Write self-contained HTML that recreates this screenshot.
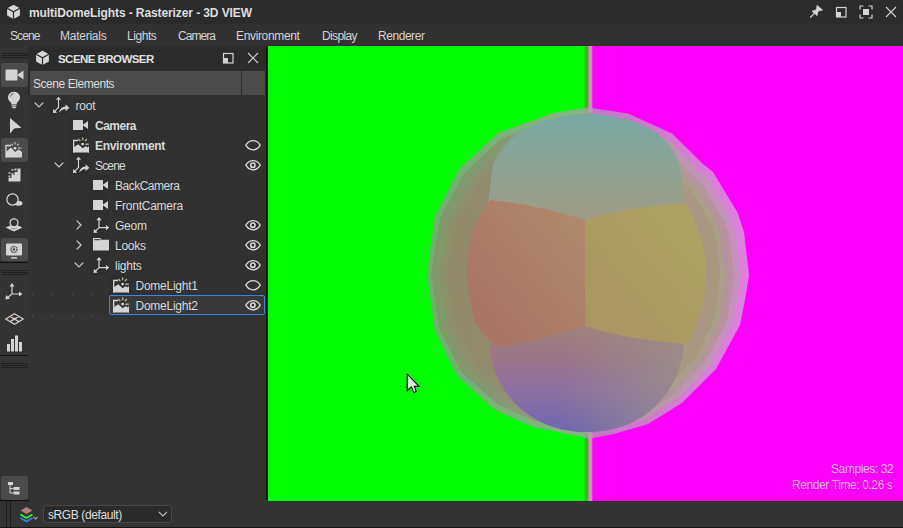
<!DOCTYPE html>
<html><head><meta charset="utf-8">
<style>
*{margin:0;padding:0;box-sizing:border-box}
html,body{width:903px;height:528px;overflow:hidden;background:#333333;font-family:"Liberation Sans",sans-serif;color:#d8d8d8}
.abs{position:absolute}
svg{position:absolute;overflow:visible}
.mi{position:absolute;top:29px;font-size:12px;letter-spacing:-0.45px;color:#d4d4d4;line-height:14px;white-space:pre}
.t{position:absolute;font-size:12px;line-height:14px;white-space:pre;color:#d8d8d8}
.b{font-weight:bold}
</style></head><body>
<!-- title bar -->
<div class="abs" style="left:0;top:0;width:903px;height:24px;background:#2b2b2b"></div>
<div class="abs" style="left:0;top:24px;width:903px;height:22px;background:#313131"></div>
<svg style="left:6px;top:3.5px" width="15" height="16" viewBox="0 0 15 16">
  <polygon points="7.5,0.8 13.9,4.3 13.9,11.4 7.5,14.9 1.1,11.4 1.1,4.3" fill="#d6d6d6"/>
  <polyline points="1.1,4.3 7.5,7.8 13.9,4.3" fill="none" stroke="#2b2b2b" stroke-width="1.2"/>
  <line x1="7.5" y1="7.8" x2="7.5" y2="15" stroke="#2b2b2b" stroke-width="1.2"/>
</svg>
<div class="abs b" style="left:29px;top:6px;font-size:12px;color:#dedede;line-height:14px;white-space:pre;letter-spacing:-0.1px">multiDomeLights - Rasterizer - 3D VIEW</div>
<!-- window buttons -->
<svg style="left:809px;top:4px" width="15" height="15" viewBox="0 0 15 15">
  <line x1="1.4" y1="13.4" x2="5.6" y2="9.2" stroke="#d8d8d8" stroke-width="1.2" stroke-linecap="round"/>
  <polygon points="3,7.1 7.2,5.9 8.1,1.2 13.6,6.1 9,7.3 8.1,11.8" fill="#d4d4d4" stroke="#d4d4d4" stroke-width="0.6" stroke-linejoin="round"/>
</svg>
<svg style="left:835px;top:6px" width="12" height="12" viewBox="0 0 12 12">
  <rect x="1.5" y="1.5" width="9.5" height="9.5" fill="none" stroke="#d4d4d4" stroke-width="1.2"/>
  <rect x="1.5" y="6" width="4.5" height="5" fill="#d4d4d4"/>
</svg>
<svg style="left:859px;top:5px" width="14" height="14" viewBox="0 0 14 14">
  <path d="M1,4.5 V1 H4.5 M9.5,1 H13 V4.5 M13,9.5 V13 H9.5 M4.5,13 H1 V9.5" fill="none" stroke="#d4d4d4" stroke-width="1.2"/>
  <rect x="4" y="4" width="6" height="6" fill="#d4d4d4"/>
</svg>
<svg style="left:885px;top:6px" width="12" height="12" viewBox="0 0 12 12">
  <path d="M1,1 L11,11 M11,1 L1,11" stroke="#d0d0d0" stroke-width="1.1"/>
</svg>
<!-- menu -->
<div class="mi" style="left:10px;letter-spacing:-0.9px">Scene</div>
<div class="mi" style="left:60px;letter-spacing:-0.25px">Materials</div>
<div class="mi" style="left:127px">Lights</div>
<div class="mi" style="left:178px;letter-spacing:-0.95px">Camera</div>
<div class="mi" style="left:236px;letter-spacing:-0.35px">Environment</div>
<div class="mi" style="left:322px;letter-spacing:-0.65px">Display</div>
<div class="mi" style="left:378px;letter-spacing:-0.45px">Renderer</div>

<!-- left toolbar -->
<div class="abs" style="left:1px;top:53px;width:27px;height:1px;background:#1f1f1f"></div>
<div class="abs" style="left:1px;top:55px;width:27px;height:1px;background:#1f1f1f"></div>
<div class="abs" style="left:1px;top:57px;width:27px;height:1px;background:#1f1f1f"></div>
<div class="abs" style="left:1px;top:63px;width:27px;height:24px;background:#4b4b4b;border-radius:3px"></div>
<svg style="left:5px;top:69px" width="19" height="12" viewBox="0 0 19 12">
  <rect x="0.5" y="0.5" width="12" height="11" rx="1" fill="#d4d4d4"/>
  <polygon points="12,6 18.5,1.5 18.5,10.5" fill="#d4d4d4"/>
</svg>
<svg style="left:7px;top:91px" width="14" height="18" viewBox="0 0 14 18">
  <path d="M7,0.8 C3.5,0.8 1,3.3 1,6.4 C1,8.6 2.3,9.8 3.6,11.3 C4.3,12.2 4.4,13 4.4,13.6 H9.6 C9.6,13 9.7,12.2 10.4,11.3 C11.7,9.8 13,8.6 13,6.4 C13,3.3 10.5,0.8 7,0.8 Z" fill="#d4d4d4"/>
  <path d="M3.5,5.5 C3.8,3.8 5,2.8 6.5,2.6" fill="none" stroke="#333" stroke-width="0.9"/>
  <rect x="4.5" y="14.3" width="5" height="1.2" fill="#d4d4d4"/>
  <rect x="5.2" y="16" width="3.6" height="1.2" fill="#d4d4d4"/>
</svg>
<svg style="left:9px;top:118px" width="13" height="16" viewBox="0 0 13 16">
  <polygon points="1,0 12.5,9.8 5.2,10.6 1,15.8" fill="#d4d4d4"/>
</svg>
<div class="abs" style="left:1px;top:138px;width:27px;height:24px;background:#4b4b4b;border-radius:3px"></div>
<svg id="envtb" style="left:5px;top:141px" width="18" height="17" viewBox="0 0 18 17">
  <path d="M1,16.5 V4.5 H6" fill="none" stroke="#d4d4d4" stroke-width="1.3"/>
  <path d="M1,16.5 V11 L6,6.5 L10,11 L13.5,8.5 L17,11 V16.5 Z" fill="#d4d4d4"/>
  <circle cx="10" cy="7.2" r="1.3" fill="#e0e0e0"/>
  <path d="M10,1 V3.5 M6.3,2.8 L7.8,4.5 M13.7,2.8 L12.2,4.5 M13,7.2 H16.5" stroke="#b8b898" stroke-width="1.3"/>
</svg>
<svg style="left:8px;top:168px" width="13" height="14" viewBox="0 0 13 14">
  <path d="M12.5,0.5 V13.5 H0.5 V10 H3.5 V7 H6.5 V4 H9.5 V0.5 Z" fill="#d4d4d4"/>
  <rect x="0.5" y="4" width="2" height="2" fill="#b0a0a0"/>
  <rect x="3.5" y="1" width="2" height="2" fill="#b0a0a0"/>
  <rect x="6.5" y="0.5" width="2" height="2" fill="#d0c0c0"/>
  <rect x="3.5" y="5" width="2" height="2" fill="#c8b8b8"/>
  <rect x="0.5" y="7.5" width="2" height="2" fill="#c8b8b8"/>
</svg>
<svg style="left:6px;top:193px" width="17" height="14" viewBox="0 0 17 14">
  <path d="M6,10 C9,13.5 16.5,13.5 16.5,10.5 C16.5,8.5 14,7.8 12.3,7.8" fill="#d4d4d4"/>
  <circle cx="6.5" cy="6.5" r="5.6" fill="#333" stroke="#d4d4d4" stroke-width="1.2"/>
</svg>
<svg style="left:5px;top:218px" width="18" height="14" viewBox="0 0 18 14">
  <path d="M0.5,9.5 L9,6 L17.5,9.5 L9,13.5 Z" fill="#d4d4d4"/>
  <circle cx="9" cy="4.8" r="4" fill="#333" stroke="#d4d4d4" stroke-width="1.2"/>
  <path d="M6,10 Q9,11.5 12,10" stroke="#a89898" stroke-width="1.3" fill="none"/>
</svg>
<div class="abs" style="left:1px;top:238px;width:27px;height:23px;background:#4b4b4b;border-radius:3px"></div>
<svg style="left:5px;top:243px" width="18" height="16" viewBox="0 0 18 16">
  <rect x="1" y="0.5" width="16" height="12" rx="1" fill="#d4d4d4"/>
  <rect x="6" y="14.2" width="6" height="1.4" fill="#d4d4d4"/>
  <circle cx="9" cy="6.5" r="3" fill="none" stroke="#444" stroke-width="1.6" stroke-dasharray="1.2 0.8"/>
  <circle cx="9" cy="6.5" r="1.2" fill="#444"/>
</svg>
<div class="abs" style="left:0;top:262px;width:28px;height:1px;background:#111"></div>
<div class="abs" style="left:1px;top:270px;width:27px;height:1px;background:#1f1f1f"></div>
<div class="abs" style="left:1px;top:272px;width:27px;height:1px;background:#1f1f1f"></div>
<div class="abs" style="left:1px;top:274px;width:27px;height:1px;background:#1f1f1f"></div>
<svg style="left:5px;top:283px" width="18" height="17" viewBox="0 0 18 17">
  <path d="M7,2.5 V11 H15.5 M7,11 L1.5,15.5" fill="none" stroke="#d4d4d4" stroke-width="1.2"/>
  <polygon points="7,0 4.5,3.5 9.5,3.5" fill="#d4d4d4"/>
  <polygon points="17.5,11 14,8.5 14,13.5" fill="#d4d4d4"/>
  <polygon points="0.5,16.5 1,12 5,15.8" fill="#d4d4d4"/>
</svg>
<svg style="left:5px;top:313px" width="19" height="12" viewBox="0 0 19 12">
  <path d="M9.5,0.8 L18.2,6 L9.5,11.2 L0.8,6 Z M5.2,3.4 L13.8,8.6 M13.8,3.4 L5.2,8.6" fill="none" stroke="#d4c8c0" stroke-width="1.3"/>
</svg>
<svg style="left:6px;top:335px" width="17" height="17" viewBox="0 0 17 17">
  <rect x="1" y="9" width="3" height="7.5" fill="#d4d4d4"/>
  <rect x="5" y="4" width="3" height="12.5" fill="#d4d4d4"/>
  <rect x="9" y="0.5" width="3" height="16" fill="#d4d4d4"/>
  <rect x="13" y="7" width="3" height="9.5" fill="#d4d4d4"/>
</svg>
<div class="abs" style="left:0;top:355px;width:28px;height:1px;background:#111"></div>
<div class="abs" style="left:1px;top:363px;width:27px;height:1px;background:#1f1f1f"></div>
<div class="abs" style="left:1px;top:365px;width:27px;height:1px;background:#1f1f1f"></div>
<div class="abs" style="left:1px;top:367px;width:27px;height:1px;background:#1f1f1f"></div>
<div class="abs" style="left:1px;top:476px;width:27px;height:24px;background:#4b4b4b;border-radius:3px"></div>
<svg style="left:7px;top:481px" width="14" height="14" viewBox="0 0 14 14">
  <rect x="1" y="1" width="5" height="3" fill="#d4d4d4"/>
  <rect x="6.5" y="6" width="6" height="3" fill="#d4d4d4"/>
  <rect x="6.5" y="10.5" width="6" height="3" fill="#d4d4d4"/>
  <path d="M3,4 V12 H6.5 M3,7.5 H6.5" fill="none" stroke="#d4d4d4" stroke-width="1"/>
</svg>
<div class="abs" style="left:0;top:500px;width:29px;height:1px;background:#111"></div>

<!-- scene browser panel -->
<div class="abs" style="left:28px;top:46px;width:238px;height:24px;background:#2b2b2b"></div>
<svg style="left:35px;top:50px" width="15" height="16" viewBox="0 0 15 16">
  <polygon points="7.5,0.8 13.9,4.3 13.9,11.4 7.5,14.9 1.1,11.4 1.1,4.3" fill="#d6d6d6"/>
  <polyline points="1.1,4.3 7.5,7.8 13.9,4.3" fill="none" stroke="#2b2b2b" stroke-width="1.2"/>
  <line x1="7.5" y1="7.8" x2="7.5" y2="15" stroke="#2b2b2b" stroke-width="1.2"/>
</svg>
<div class="abs b" style="left:58px;top:52px;font-size:11.5px;line-height:14px;color:#e0e0e0;white-space:pre;letter-spacing:-0.55px">SCENE BROWSER</div>
<svg style="left:222px;top:52px" width="12" height="12" viewBox="0 0 12 12">
  <rect x="1.5" y="1.5" width="9.5" height="9.5" fill="none" stroke="#d4d4d4" stroke-width="1.2"/>
  <rect x="1.5" y="6" width="4.5" height="5" fill="#d4d4d4"/>
</svg>
<svg style="left:247px;top:52px" width="12" height="12" viewBox="0 0 12 12">
  <path d="M1,1 L11,11 M11,1 L1,11" stroke="#d0d0d0" stroke-width="1.1"/>
</svg>
<div class="abs" style="left:28px;top:70px;width:238px;height:25px;background:#2b2b2b"></div>
<div class="abs" style="left:30px;top:71px;width:211px;height:24px;background:#4b4b4b"></div>
<div class="abs" style="left:242px;top:71px;width:23px;height:24px;background:#4b4b4b"></div>
<div class="t" style="left:33px;top:77px;letter-spacing:-0.45px;color:#dadada">Scene Elements</div>

<!-- tree row icon cells (subtle) -->
<div class="abs" style="left:29px;top:95px;width:236px;height:220px;background:#313131"></div>
<div class="abs" style="left:49px;top:95px;width:20px;height:20px;background:#2e2e2e"></div>
<div class="abs" style="left:69px;top:115px;width:20px;height:40px;background:#2e2e2e"></div>
<div class="abs" style="left:69px;top:155px;width:20px;height:20px;background:#2e2e2e"></div>
<div class="abs" style="left:89px;top:175px;width:20px;height:100px;background:#2e2e2e"></div>
<div class="abs" style="left:109px;top:275px;width:20px;height:20px;background:#2e2e2e"></div>

<div class="abs" style="left:32px;top:294px;width:1px;height:1px;background:#4a5a8a"></div><div class="abs" style="left:52px;top:294px;width:1px;height:1px;background:#4a5a8a"></div><div class="abs" style="left:72px;top:294px;width:1px;height:1px;background:#4a5a8a"></div><div class="abs" style="left:92px;top:294px;width:1px;height:1px;background:#4a5a8a"></div><div class="abs" style="left:32px;top:315px;width:1px;height:1px;background:#4a5a8a"></div><div class="abs" style="left:52px;top:315px;width:1px;height:1px;background:#4a5a8a"></div><div class="abs" style="left:72px;top:315px;width:1px;height:1px;background:#4a5a8a"></div><div class="abs" style="left:92px;top:315px;width:1px;height:1px;background:#4a5a8a"></div>
<!-- selection -->
<div class="abs" style="left:109px;top:295px;width:156px;height:20px;background:#393939;border:1px solid #3a84e6;border-radius:2px"></div>
<!--TREE--><svg width="0" height="0" style="position:absolute"><defs>
<g id="i-xf"><path d="M6.5,3.5 V11.5 L2.6,15.4" fill="none" stroke="#d4d4d4" stroke-width="1.1"/>
<polygon points="6.5,0.8 3.9,3.8 9.1,3.8" fill="#d4d4d4"/><polygon points="1,17 1.2,12.9 5.1,16.8" fill="#d4d4d4"/>
<path d="M7,16.6 C7.6,13.2 10,10.9 13.6,10.6 V8.2 L17.3,11.8 L13.6,15.3 V13 C11,13 9,14.6 7,16.6 Z" fill="#d4d4d4"/></g>
<g id="i-ax"><path d="M6,2.5 V10.6 H13.5 M6,10.6 L1.8,14.8" fill="none" stroke="#d4d4d4" stroke-width="1.2"/>
<polygon points="6,0 3.4,3.2 8.6,3.2" fill="#d4d4d4"/><polygon points="16.2,10.6 13,8 13,13.2" fill="#d4d4d4"/><polygon points="0.6,16 1,11.8 4.6,15.4" fill="#d4d4d4"/></g>
<g id="i-cam"><rect x="0" y="0" width="10" height="10" rx="0.6" fill="#d4d4d4"/><polygon points="9.5,5 15,1 15,9" fill="#d4d4d4"/></g>
<g id="i-env"><path d="M0.7,15.5 V3.5 H5.2" fill="none" stroke="#d4d4d4" stroke-width="1.3"/>
<path d="M0.2,15.5 V10.8 L5.2,7.3 L9.6,11.3 L12.6,9.2 L16,11.3 V15.5 Z" fill="#d4d4d4"/>
<path d="M15.4,15.5 V9.5" stroke="#d4d4d4" stroke-width="1.2"/>
<rect x="8.5" y="6" width="2.2" height="2.2" fill="#e8e8e8"/>
<path d="M9.6,0.5 V3.2 M5.4,2 L7.3,4.1 M13.8,2 L11.9,4.1 M12.3,7.2 H15.8" stroke="#b4b498" stroke-width="1.4"/></g>
<g id="i-fold"><path d="M0,0 H7.2 L8.5,1.8 H16 V12.6 H0 Z" fill="#d4d4d4"/><rect x="1.2" y="1.2" width="6.2" height="1" fill="#2f2f2f"/></g>
<g id="i-eye"><path d="M0.8,5.2 C3,1.4 5.5,0.6 8,0.6 C10.5,0.6 13,1.4 15.2,5.2 C13,9 10.5,9.8 8,9.8 C5.5,9.8 3,9 0.8,5.2 Z" fill="none" stroke="#d8d8d8" stroke-width="1.3"/></g>
<g id="i-eyeo"><use href="#i-eye"/><circle cx="7.9" cy="5.2" r="2.2" fill="none" stroke="#d8d8d8" stroke-width="1.6"/></g>
<path id="i-down" d="M0.7,0.7 L5,5 L9.3,0.7" fill="none" stroke="#cfcfcf" stroke-width="1.2"/>
<path id="i-right" d="M0.7,0.7 L5,5 L0.7,9.3" fill="none" stroke="#cfcfcf" stroke-width="1.2"/>
</defs></svg>
<svg style="left:34px;top:102px" width="11" height="7"><use href="#i-down"/></svg>
<svg style="left:52px;top:96px" width="18" height="17"><use href="#i-xf"/></svg>
<div class="t" style="left:75.5px;top:99px;letter-spacing:-0.2px">root</div>
<svg style="left:73px;top:120px" width="18" height="17"><use href="#i-cam"/></svg>
<div class="t b" style="left:95px;top:119px;letter-spacing:-0.5px">Camera</div>
<svg style="left:73px;top:137px" width="18" height="17"><use href="#i-env"/></svg>
<div class="t b" style="left:95px;top:139px;letter-spacing:-0.3px">Environment</div>
<svg style="left:245px;top:140px" width="17" height="11"><use href="#i-eye"/></svg>
<svg style="left:54px;top:162px" width="11" height="7"><use href="#i-down"/></svg>
<svg style="left:72px;top:156px" width="18" height="17"><use href="#i-xf"/></svg>
<div class="t" style="left:95px;top:159px;letter-spacing:-0.85px">Scene</div>
<svg style="left:245px;top:160px" width="17" height="11"><use href="#i-eyeo"/></svg>
<svg style="left:93px;top:180px" width="18" height="17"><use href="#i-cam"/></svg>
<div class="t" style="left:115px;top:179px;letter-spacing:-0.5px">BackCamera</div>
<svg style="left:93px;top:200px" width="18" height="17"><use href="#i-cam"/></svg>
<div class="t" style="left:115px;top:199px;letter-spacing:-0.25px">FrontCamera</div>
<svg style="left:76px;top:220px" width="7" height="11"><use href="#i-right"/></svg>
<svg style="left:93px;top:217px" width="18" height="17"><use href="#i-ax"/></svg>
<div class="t" style="left:115px;top:219px;letter-spacing:-0.25px">Geom</div>
<svg style="left:245px;top:220px" width="17" height="11"><use href="#i-eyeo"/></svg>
<svg style="left:76px;top:240px" width="7" height="11"><use href="#i-right"/></svg>
<svg style="left:93px;top:238px" width="18" height="17"><use href="#i-fold"/></svg>
<div class="t" style="left:115px;top:239px;letter-spacing:-0.25px">Looks</div>
<svg style="left:245px;top:240px" width="17" height="11"><use href="#i-eyeo"/></svg>
<svg style="left:74px;top:262px" width="11" height="7"><use href="#i-down"/></svg>
<svg style="left:93px;top:257px" width="18" height="17"><use href="#i-ax"/></svg>
<div class="t" style="left:115px;top:259px;letter-spacing:-0.25px">lights</div>
<svg style="left:245px;top:260px" width="17" height="11"><use href="#i-eyeo"/></svg>
<svg style="left:113px;top:277px" width="18" height="17"><use href="#i-env"/></svg>
<div class="t" style="left:135.5px;top:279px;letter-spacing:-0.25px">DomeLight1</div>
<svg style="left:245px;top:280px" width="17" height="11"><use href="#i-eye"/></svg>
<svg style="left:113px;top:297px" width="18" height="17"><use href="#i-env"/></svg>
<div class="t" style="left:135.5px;top:299px;letter-spacing:-0.25px">DomeLight2</div>
<svg style="left:245px;top:300px" width="17" height="11"><use href="#i-eyeo"/></svg><!--/TREE-->

<!-- viewport -->
<div class="abs" style="left:266px;top:46px;width:1px;height:454px;background:#141414"></div><div class="abs" style="left:267px;top:46px;width:1px;height:455px;background:#262626"></div>
<div class="abs" style="left:268px;top:46px;width:635px;height:455px;background:linear-gradient(90deg,#00ff00 0,#00ff00 315px,#3aa81c 319px,#a8a07c 321px,#e890e0 323px,#ff00ff 325px)"></div>
<svg id="sphere" style="left:268px;top:46px" width="635" height="455" viewBox="268 46 635 455"><defs>
<linearGradient id="gtop" x1="0" y1="0" x2="0" y2="1">
 <stop offset="0" stop-color="#76aaa6"/><stop offset="0.4" stop-color="#8aa496"/><stop offset="1" stop-color="#9e9c86"/>
</linearGradient>
<linearGradient id="gbot" x1="0" y1="0" x2="0" y2="1">
 <stop offset="0" stop-color="#a08078"/><stop offset="0.3" stop-color="#9a7488"/><stop offset="0.62" stop-color="#8c70a2"/><stop offset="1" stop-color="#7066b2"/>
</linearGradient>
<linearGradient id="gbotr" gradientUnits="userSpaceOnUse" x1="560" y1="0" x2="690" y2="0">
 <stop offset="0" stop-color="#989088" stop-opacity="0"/><stop offset="1" stop-color="#9a9088" stop-opacity="0.85"/>
</linearGradient>
<linearGradient id="gor" x1="1" y1="0" x2="0" y2="1">
 <stop offset="0" stop-color="#b08a6a"/><stop offset="1" stop-color="#a87062"/>
</linearGradient>
<linearGradient id="gye" x1="1" y1="0" x2="0" y2="1">
 <stop offset="0" stop-color="#aca662"/><stop offset="1" stop-color="#aa9462"/>
</linearGradient>
<linearGradient id="gl0" gradientUnits="userSpaceOnUse" x1="427" y1="0" x2="749" y2="0"><stop offset="0" stop-color="#969696"/><stop offset="0.5" stop-color="#b0a0b0"/><stop offset="1" stop-color="#d5abd5"/></linearGradient><linearGradient id="gl1" gradientUnits="userSpaceOnUse" x1="427" y1="0" x2="749" y2="0"><stop offset="0" stop-color="#809868"/><stop offset="0.2" stop-color="#849870"/><stop offset="0.5" stop-color="#a49a8a"/><stop offset="0.8" stop-color="#c094b4"/><stop offset="1" stop-color="#c890c0"/></linearGradient><linearGradient id="gl2" gradientUnits="userSpaceOnUse" x1="427" y1="0" x2="749" y2="0"><stop offset="0" stop-color="#8a9068"/><stop offset="0.2" stop-color="#8c9070"/><stop offset="0.5" stop-color="#a09888"/><stop offset="0.8" stop-color="#b09898"/><stop offset="1" stop-color="#b890a0"/></linearGradient><linearGradient id="gl3" gradientUnits="userSpaceOnUse" x1="427" y1="0" x2="749" y2="0"><stop offset="0" stop-color="#908868"/><stop offset="0.2" stop-color="#928a6c"/><stop offset="0.5" stop-color="#a09a84"/><stop offset="0.8" stop-color="#a8a088"/><stop offset="1" stop-color="#a8a088"/></linearGradient><linearGradient id="gl4" gradientUnits="userSpaceOnUse" x1="427" y1="0" x2="749" y2="0"><stop offset="0" stop-color="#908868"/><stop offset="0.2" stop-color="#928a6c"/><stop offset="0.5" stop-color="#a09a84"/><stop offset="0.8" stop-color="#a89884"/><stop offset="1" stop-color="#a89880"/></linearGradient><filter id="bl1" x="-5%" y="-5%" width="110%" height="110%"><feGaussianBlur stdDeviation="1.2"/></filter><linearGradient id="gl4" gradientUnits="userSpaceOnUse" x1="427" y1="0" x2="749" y2="0"><stop offset="0" stop-color="#908868"/><stop offset="0.2" stop-color="#928a6c"/><stop offset="0.5" stop-color="#a09a84"/><stop offset="0.8" stop-color="#a89884"/><stop offset="1" stop-color="#a89880"/></linearGradient><filter id="bl2" x="-5%" y="-5%" width="110%" height="110%"><feGaussianBlur stdDeviation="0.8"/></filter></defs>
<polygon points="588.0,107.5 628.0,113.5 672.0,133.5 703.0,164.0 713.0,172.0 737.5,212.5 744.0,232.0 749.0,275.0 745.0,300.0 740.0,325.0 716.0,369.0 682.0,403.0 648.0,424.0 614.0,434.0 590.0,438.5 584.0,437.5 533.0,427.0 495.0,410.0 457.0,376.0 435.0,331.0 427.0,275.0 430.0,250.0 435.0,216.0 459.0,169.0 498.0,133.0 553.0,113.0" fill="url(#gl0)" fill-opacity="0.75"/>
<polygon points="588.0,112.5 626.6,119.3 668.4,139.6 697.2,169.5 706.8,177.0 730.1,215.5 736.3,234.0 741.0,274.9 737.5,298.7 733.2,322.7 710.9,365.2 678.5,398.1 645.8,418.4 613.0,428.1 589.9,432.5 584.1,431.5 535.0,421.3 498.4,405.0 461.5,372.5 439.6,329.3 431.0,274.9 434.5,250.7 440.0,217.9 464.1,173.1 501.5,138.4 554.2,118.4" fill="url(#gl1)"/>
<polygon points="588.0,117.5 625.1,125.0 664.7,145.6 691.4,175.0 700.7,182.0 723.1,218.3 729.2,235.9 734.0,274.8 730.9,297.6 727.0,320.6 706.0,361.5 675.2,393.6 644.0,413.8 612.3,423.7 589.9,428.5 584.2,427.4 537.0,415.9 502.3,399.2 467.8,367.5 447.1,326.4 439.0,274.9 442.8,251.9 448.4,221.0 471.7,179.2 506.2,145.7 555.5,124.6" fill="url(#gl2)"/>
<polygon points="588.0,123.5 623.5,131.4 660.9,151.9 685.6,180.5 694.3,187.1 715.3,221.5 720.8,238.1 725.1,274.7 722.6,296.2 719.7,318.0 700.7,357.5 671.7,388.7 641.7,408.2 611.4,417.8 589.8,422.5 584.4,421.3 539.3,409.5 506.5,393.0 474.1,362.6 454.6,323.6 447.0,274.8 450.5,253.0 455.4,223.6 477.3,183.7 509.8,151.4 556.9,130.8" fill="url(#gl3)"/>
<polygon points="588.0,127.5 622.5,135.3 658.8,155.4 682.7,183.3 691.1,189.7 711.1,223.2 716.3,239.3 720.1,274.6 717.9,295.3 715.3,316.6 697.4,355.0 669.3,385.5 640.3,404.5 610.7,413.9 589.8,418.5 584.5,417.4 540.3,406.5 507.9,390.9 475.4,361.5 455.4,323.3 447.1,274.8 451.2,253.1 457.1,224.3 480.0,185.9 512.0,154.7 557.7,134.7" fill="url(#gl4)"/>
<path d="M488,203 L491,178 C492,166 495,158 500,152 C508,141 516,134 525,129 C545,119 565,115 588,114 C612,115 632,120 651,129 C661,135 669,144 675,154 C679,162 681,170 682,178 L684,204 L585,220 Z" fill="url(#gtop)"/>
<path d="M490,345 C492,392 530,432 587,432 C645,432 680,392 684,342 L585,326 Z" fill="url(#gbot)"/>
<path d="M490,345 C492,392 530,432 587,432 C645,432 680,392 684,342 L585,326 Z" fill="url(#gbotr)"/>
<path d="M490,200 C530,204 560,212 585,220 L585,326 C560,333 530,342 500,347 C488,340 478,330 473,315 C469,300 467,285 467,270 C467,245 475,220 490,200 Z" fill="url(#gor)"/>
<path d="M585,220 C610,212 650,205 685,203 C698,222 706,247 706,272 C706,300 700,322 688,344 C650,342 610,334 585,326 Z" fill="url(#gye)"/></svg>
<svg style="left:406px;top:373px" width="15" height="22" viewBox="0 0 15 22">
  <polygon points="1.2,1.2 1.2,17.6 5.2,13.8 8,19.6 10.2,18.6 8.4,13.2 12.9,13.2" fill="#e4e4e4" stroke="#000" stroke-width="1.1" stroke-linejoin="miter"/>
</svg>
<div class="t" style="left:831px;top:462px;color:#e8b8e8;letter-spacing:-0.4px">Samples: 32</div>
<div class="t" style="left:792px;top:478px;color:#e8b8e8;letter-spacing:-0.4px">Render Time: 0.26 s</div>

<!-- bottom bar -->
<div class="abs" style="left:6px;top:501px;width:1px;height:27px;background:#1c1c1c"></div>
<div class="abs" style="left:10px;top:501px;width:1px;height:27px;background:#1c1c1c"></div>
<div class="abs" style="left:0;top:527px;width:903px;height:1px;background:#161616"></div>
<svg style="left:19px;top:506px" width="22" height="17" viewBox="0 0 22 17">
  <path d="M1.5,4.5 L7.5,1 L13.5,4.5 L7.5,8 Z" fill="#b08080"/>
  <path d="M1.5,8.5 L7.5,12 L13.5,8.5" fill="none" stroke="#20ff20" stroke-width="1.8"/>
  <path d="M1.5,12 L7.5,15.5 L13.5,12" fill="none" stroke="#3080f0" stroke-width="1.8"/>
  <path d="M14.5,11 L16.5,13 L18.5,11" fill="none" stroke="#a8a8a0" stroke-width="1.1"/>
</svg>
<div class="abs" style="left:43px;top:505px;width:129px;height:18px;background:#2a2a2a;border:1px solid #464646;border-radius:3px"></div>
<div class="t" style="left:48px;top:508px;color:#dedede;letter-spacing:-0.4px">sRGB (default)</div>
<svg style="left:158px;top:511px" width="11" height="7" viewBox="0 0 11 7">
  <path d="M0.8,0.8 L4.9,4.9 L9,0.8" fill="none" stroke="#bdbdbd" stroke-width="1.2"/>
</svg>
</body></html>
